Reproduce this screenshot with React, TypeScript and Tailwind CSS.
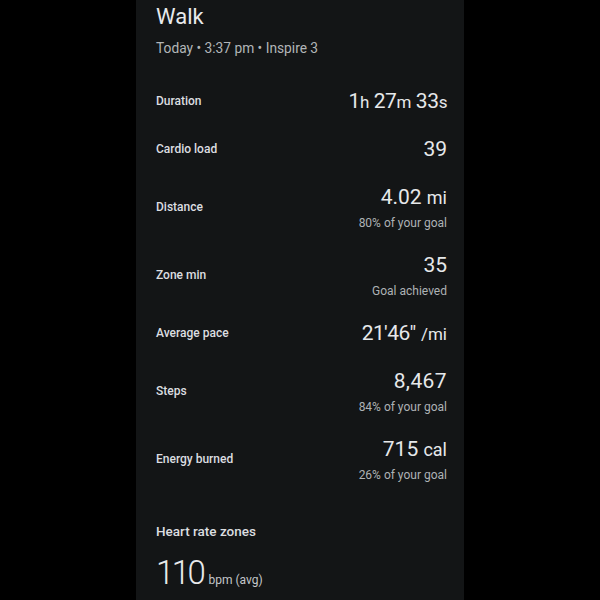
const font = { fontFamily: "Roboto, 'Noto Sans', sans-serif" };

type Stat = {
  label: string;
  value: React.ReactNode;
  sub?: string;
};

const Unit = ({ children, small }: { children: React.ReactNode; small?: boolean }) => (
  <span className={small ? "text-[17px]" : "text-[18px]"}>{children}</span>
);

const stats: Stat[] = [
  {
    label: "Duration",
    value: (
      <span className="tracking-[-0.4px]">
        1<Unit small>h</Unit> 27<Unit small>m</Unit> 33<Unit small>s</Unit>
      </span>
    ),
  },
  { label: "Cardio load", value: "39" },
  {
    label: "Distance",
    value: (
      <>
        4.02 <Unit>mi</Unit>
      </>
    ),
    sub: "80% of your goal",
  },
  { label: "Zone min", value: "35", sub: "Goal achieved" },
  {
    label: "Average pace",
    value: (
      <>
        <span className="tracking-[-0.6px]">21'46"</span> <Unit small>/mi</Unit>
      </>
    ),
  },
  { label: "Steps", value: <span className="tracking-[0.4px]">8,467</span>, sub: "84% of your goal" },
  {
    label: "Energy burned",
    value: (
      <>
        715 <Unit>cal</Unit>
      </>
    ),
    sub: "26% of your goal",
  },
];

const StatRow = ({ label, value, sub }: Stat) => (
  <div className="flex items-center justify-between">
    <div className="text-[12px] font-medium text-[#dcdee0]">{label}</div>
    <div className="flex flex-col items-end">
      <div className="h-[28px] text-[21px] leading-[28px] text-[#e6e8ea]">
        {value}
      </div>
      {sub && (
        <div className="mt-[4px] h-[16px] text-[12px] leading-[16px] text-[#aeb2b5]">
          {sub}
        </div>
      )}
    </div>
  </div>
);

export default function App() {
  return (
    <div className="flex h-[600px] w-[600px] justify-center bg-black" style={font}>
      <div className="h-full w-[328px] overflow-hidden bg-[#131516] pl-[20px] pr-[17px] pt-[3px]">
        <h1 className="text-[22px] leading-[28px] text-[#e8eaec]">Walk</h1>
        <div className="mt-[7px] text-[13.75px] leading-[20px] text-[#b2b5b8]">
          Today • 3:37 pm • Inspire 3
        </div>

        <div className="mt-[29px] flex flex-col gap-[20px]">
          {stats.map((s) => (
            <StatRow key={s.label} {...s} />
          ))}
        </div>

        <div className="mt-[38px] text-[13.5px] font-medium leading-[20px] text-[#dcdee0]">
          Heart rate zones
        </div>
        <div className="mt-[12px] flex items-baseline gap-[5px]">
          <span className="text-[33px] font-light leading-[40px] tracking-[-2.5px] text-[#e8eaec]">
            110
          </span>
          <span className="text-[12px] text-[#c4c7ca]">bpm (avg)</span>
        </div>
      </div>
    </div>
  );
}
